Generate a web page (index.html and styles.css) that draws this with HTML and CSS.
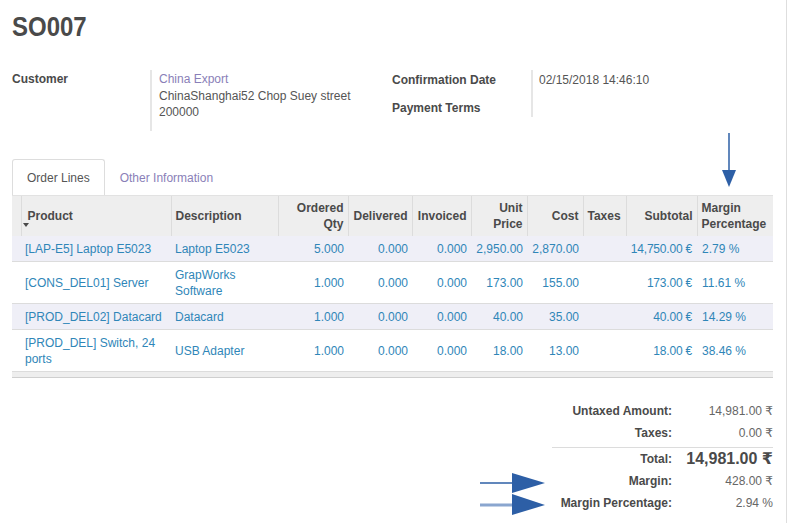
FILE: index.html
```html
<!DOCTYPE html>
<html>
<head>
<meta charset="utf-8">
<link rel="stylesheet" href="styles.css">
</head>
<body>
<div class="page">
  <h1 class="title"><span class="title-text">SO007</span></h1>

  <div class="groups">
    <div class="group group-left">
      <div class="label">Customer</div>
      <div class="value customer">
        <div class="link">China Export</div>
        <div>ChinaShanghai52 Chop Suey street</div>
        <div>200000</div>
      </div>
    </div>
    <div class="group group-right">
      <div class="label r1">Confirmation Date</div>
      <div class="value r1 date">02/15/2018 14:46:10</div>
      <div class="label r2">Payment Terms</div>
      <div class="value r2"></div>
    </div>
  </div>

  <div class="tabs">
    <div class="tab active">Order Lines</div>
    <div class="tab link">Other Information</div>
  </div>

  <table class="lines">
    <colgroup>
      <col style="width:9px"><col style="width:150px"><col style="width:107px"><col style="width:70px"><col style="width:64px"><col style="width:59px"><col style="width:56px"><col style="width:56px"><col style="width:43px"><col style="width:71px"><col style="width:76px">
    </colgroup>
    <thead>
      <tr>
        <th class="handle"></th>
        <th class="product">Product<span class="caret"></span></th>
        <th>Description</th>
        <th class="num">Ordered<br>Qty</th>
        <th class="num">Delivered</th>
        <th class="num">Invoiced</th>
        <th class="num">Unit<br>Price</th>
        <th class="num">Cost</th>
        <th>Taxes</th>
        <th class="num">Subtotal</th>
        <th>Margin<br>Percentage</th>
      </tr>
    </thead>
    <tbody>
      <tr class="alt">
        <td></td><td>[LAP-E5] Laptop E5023</td><td>Laptop E5023</td>
        <td class="num">5.000</td><td class="num">0.000</td><td class="num">0.000</td>
        <td class="num">2,950.00</td><td class="num">2,870.00</td><td></td>
        <td class="num sub">14,750.00 €</td><td>2.79 %</td>
      </tr>
      <tr>
        <td></td><td>[CONS_DEL01] Server</td><td>GrapWorks Software</td>
        <td class="num">1.000</td><td class="num">0.000</td><td class="num">0.000</td>
        <td class="num">173.00</td><td class="num">155.00</td><td></td>
        <td class="num sub">173.00 €</td><td>11.61 %</td>
      </tr>
      <tr class="alt">
        <td></td><td>[PROD_DEL02] Datacard</td><td>Datacard</td>
        <td class="num">1.000</td><td class="num">0.000</td><td class="num">0.000</td>
        <td class="num">40.00</td><td class="num">35.00</td><td></td>
        <td class="num sub">40.00 €</td><td>14.29 %</td>
      </tr>
      <tr>
        <td></td><td>[PROD_DEL] Switch, 24 ports</td><td>USB Adapter</td>
        <td class="num">1.000</td><td class="num">0.000</td><td class="num">0.000</td>
        <td class="num">18.00</td><td class="num">13.00</td><td></td>
        <td class="num sub">18.00 €</td><td>38.46 %</td>
      </tr>
    </tbody>
    <tfoot>
      <tr><td colspan="11"></td></tr>
    </tfoot>
  </table>

  <div class="totals">
    <div class="t-label">Untaxed Amount:</div><div class="t-value">14,981.00 ₹</div>
    <div class="t-label">Taxes:</div><div class="t-value">0.00 ₹</div>
    <div class="t-label total">Total:</div><div class="t-value total big">14,981.00 ₹</div>
    <div class="t-label">Margin:</div><div class="t-value">428.00 ₹</div>
    <div class="t-label">Margin Percentage:</div><div class="t-value">2.94 %</div>
  </div>

  <svg class="annot" width="789" height="523" viewBox="0 0 789 523">
    <line x1="729" y1="133" x2="729" y2="171" stroke="#2d5fa6" stroke-width="1.5"/>
    <polygon points="722,170 736,170 729,187" fill="#2d5fa6"/>
    <line x1="480" y1="483" x2="514" y2="483" stroke="#2d5fa6" stroke-width="1.5"/>
    <polygon points="512,473 512,493 545,483" fill="#2d5fa6"/>
    <line x1="480" y1="505" x2="514" y2="505" stroke="#8aa6cf" stroke-width="3"/>
    <polygon points="512,494 512,515 545,505" fill="#2d5fa6"/>
  </svg>
</div>
</body>
</html>
```

FILE: styles.css
```css
html, body {
  margin: 0;
  padding: 0;
  background: #fff;
}
body {
  font-family: "Liberation Sans", Arial, "DejaVu Sans", sans-serif;
  font-size: 12px;
  color: #555;
}
.page {
  position: relative;
  width: 787px;
  height: 523px;
  border-right: 1px solid #dedede;
  padding-left: 12px;
  box-sizing: border-box;
  overflow: hidden;
}
.title {
  margin: 0;
  padding-top: 12px;
  font-size: 24px;
  line-height: 32px;
  font-weight: bold;
  color: #4a4a4a;
  height: 32px;
}
.title-text {
  display: inline-block;
  transform: scale(1, 1.16);
  transform-origin: 0 25px;
}
.groups {
  display: flex;
  margin-top: 26px;
}
.label {
  font-weight: bold;
  color: #4a4a4a;
}
.link {
  color: #8a7fb8;
}
.group-left {
  display: flex;
  width: 380px;
}
.group-left .label {
  width: 138px;
  padding-top: 1px;
  line-height: 16.5px;
}
.customer {
  border-left: 2px solid #e6e6e6;
  padding: 1px 0 9.5px 7px;
  line-height: 16.5px;
  height: 50px;
}
.group-right {
  display: grid;
  grid-template-columns: 139px 1fr;
  grid-template-rows: 29px 18px;
}
.group-right .label {
  line-height: 17px;
}
.group-right .r1 { padding-top: 2px; }
.group-right .r2 { padding-top: 1px; }
.group-right .value {
  border-left: 2px solid #e6e6e6;
  padding-left: 6px;
  line-height: 17px;
}
.date { color: #555; }

.tabs {
  display: flex;
  margin-top: 28px;
  height: 36px;
}
.tab {
  padding: 0 14px;
  line-height: 36px;
  border: 1px solid transparent;
  border-bottom: none;
  border-radius: 3px 3px 0 0;
}
.tab.active {
  border-color: #dddddd;
  color: #555;
  background: #fff;
}
.tab.link { color: #8a7fb8; }

.lines {
  border-collapse: collapse;
  table-layout: fixed;
  width: 761px;
}
.lines th {
  background: #eeeeee;
  font-weight: bold;
  color: #4a4a4a;
  text-align: left;
  line-height: 16px;
  padding: 4px 4px;
  height: 41px;
  box-sizing: border-box;
  border-left: 1px solid #dcdcdc;
  border-top: 1px solid #e2e2e2;
  vertical-align: middle;
  white-space: nowrap;
}
.lines th.handle { border-left: none; }
.lines th.product {
  position: relative;
  padding-left: 6px;
}
.caret {
  position: absolute;
  left: 1px;
  top: 27px;
  width: 0;
  height: 0;
  border-left: 3.5px solid transparent;
  border-right: 3.5px solid transparent;
  border-top: 4px solid #4a4a4a;
}
.lines .num {
  text-align: right;
  white-space: nowrap;
}
.lines td {
  color: #2f86b8;
  line-height: 16px;
  padding: 5px 4px 4px 4px;
  vertical-align: middle;
  border-bottom: 1px solid #dcdcdc;
}
.lines tbody tr.alt td { background: #efeff7; }
.lines tbody td.sub {
  padding-left: 0;
  padding-right: 5px;
  letter-spacing: -0.2px;
}
.lines tbody td:nth-child(11) { padding-left: 5px; }
.lines tfoot td {
  background: #eeeeee;
  height: 5px;
  padding: 0;
  border-bottom: 1px solid #cfcfcf;
}

.totals {
  display: grid;
  grid-template-columns: 120px 101px;
  margin-top: 22px;
  margin-left: 540px;
  width: 221px;
}
.t-label {
  text-align: right;
  font-weight: bold;
  color: #4a4a4a;
  line-height: 22px;
}
.t-value {
  text-align: right;
  color: #666;
  line-height: 22px;
}
.total {
  border-top: 1px solid #dcdcdc;
  margin-top: 3px;
  line-height: 22px;
}
.big {
  font-size: 16px;
  font-weight: bold;
  color: #4a4a4a;
}
.annot {
  position: absolute;
  left: 0;
  top: 0;
  pointer-events: none;
}
```
